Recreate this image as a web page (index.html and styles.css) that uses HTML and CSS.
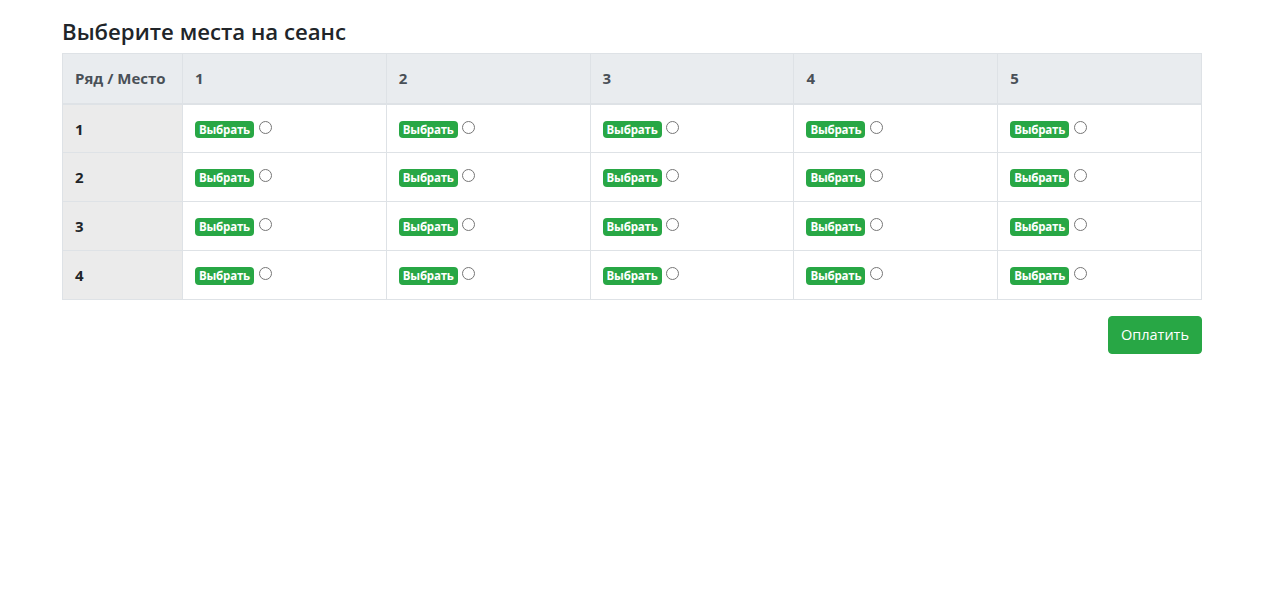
FILE: index.html
```html
<!DOCTYPE html>
<html lang="ru">
<head>
<meta charset="utf-8">
<title>Выбор мест</title>
<link rel="stylesheet" href="styles.css">
</head>
<body>
<div class="container">
  <h4 class="title">Выберите места на сеанс</h4>
  <table class="seats">
    <colgroup>
      <col class="col-row">
      <col><col><col><col><col>
    </colgroup>
    <thead>
      <tr><th>Ряд / Место</th><th>1</th><th>2</th><th>3</th><th>4</th><th>5</th></tr>
    </thead>
    <tbody>
      <tr><th class="row-num">1</th>
        <td><span class="badge">Выбрать</span> <input type="radio" class="radio" name="s"></td>
        <td><span class="badge">Выбрать</span> <input type="radio" class="radio" name="s"></td>
        <td><span class="badge">Выбрать</span> <input type="radio" class="radio" name="s"></td>
        <td><span class="badge">Выбрать</span> <input type="radio" class="radio" name="s"></td>
        <td><span class="badge">Выбрать</span> <input type="radio" class="radio" name="s"></td>
      </tr>
      <tr><th class="row-num">2</th>
        <td><span class="badge">Выбрать</span> <input type="radio" class="radio" name="s"></td>
        <td><span class="badge">Выбрать</span> <input type="radio" class="radio" name="s"></td>
        <td><span class="badge">Выбрать</span> <input type="radio" class="radio" name="s"></td>
        <td><span class="badge">Выбрать</span> <input type="radio" class="radio" name="s"></td>
        <td><span class="badge">Выбрать</span> <input type="radio" class="radio" name="s"></td>
      </tr>
      <tr><th class="row-num">3</th>
        <td><span class="badge">Выбрать</span> <input type="radio" class="radio" name="s"></td>
        <td><span class="badge">Выбрать</span> <input type="radio" class="radio" name="s"></td>
        <td><span class="badge">Выбрать</span> <input type="radio" class="radio" name="s"></td>
        <td><span class="badge">Выбрать</span> <input type="radio" class="radio" name="s"></td>
        <td><span class="badge">Выбрать</span> <input type="radio" class="radio" name="s"></td>
      </tr>
      <tr><th class="row-num">4</th>
        <td><span class="badge">Выбрать</span> <input type="radio" class="radio" name="s"></td>
        <td><span class="badge">Выбрать</span> <input type="radio" class="radio" name="s"></td>
        <td><span class="badge">Выбрать</span> <input type="radio" class="radio" name="s"></td>
        <td><span class="badge">Выбрать</span> <input type="radio" class="radio" name="s"></td>
        <td><span class="badge">Выбрать</span> <input type="radio" class="radio" name="s"></td>
      </tr>
    </tbody>
  </table>
  <div class="actions">
    <button class="btn-pay" type="button">Оплатить</button>
  </div>
</div>
</body>
</html>
```
FILE: styles.css
```css
* { box-sizing: border-box; }
html, body { margin: 0; padding: 0; background: #fff; }
body {
  font-family: "Open Sans", "Noto Sans", "Liberation Sans", sans-serif;
  font-size: 16px;
  line-height: 1.5;
  color: #212529;
  padding-left: 2px;
}
.container {
  width: 1140px;
  margin: 0 auto;
  padding-top: 17px;
}
.title {
  margin: 0 0 7px;
  font-size: 22.2px;
  font-weight: 600;
  line-height: 29px;
  color: #212529;
}
.seats {
  width: 100%;
  border-collapse: collapse;
  table-layout: fixed;
  margin-bottom: 16px;
  border: 1px solid #dee2e6;
}
.col-row { width: 120px; }
.seats th, .seats td {
  border: 1px solid #dee2e6;
  padding: 12px;
  padding-top: 13px;
  text-align: left;
  vertical-align: top;
  height: 49px;
}
.seats thead th {
  background: #e9ecef;
  color: #495057;
  font-weight: 700;
  font-size: 15px;
  border-bottom: 2px solid #dee2e6;
  padding-top: 13px;
  height: 50px;
}
.seats .row-num {
  background: #ebebeb;
  font-weight: 700;
  font-size: 15px;
}
.seats td { font-size: 14.5px; padding-top: 12px; }
.badge {
  display: inline-block;
  background: #28a745;
  color: #fff;
  font-size: 11.5px;
  font-weight: 700;
  line-height: 1;
  padding: 3px 4px;
  border-radius: 4px;
  vertical-align: -1px;
  letter-spacing: -0.2px;
}
.radio {
  width: 13px;
  height: 13px;
  margin: 0 0 0 1px;
  vertical-align: -1px;
}
.actions {
  display: flex;
  justify-content: flex-end;
}
.btn-pay {
  font-family: inherit;
  font-size: 14.5px;
  line-height: 24px;
  color: #fff;
  background: #28a745;
  border: 1px solid #28a745;
  border-radius: 4px;
  padding: 6px 12px;
  cursor: pointer;
}
```
